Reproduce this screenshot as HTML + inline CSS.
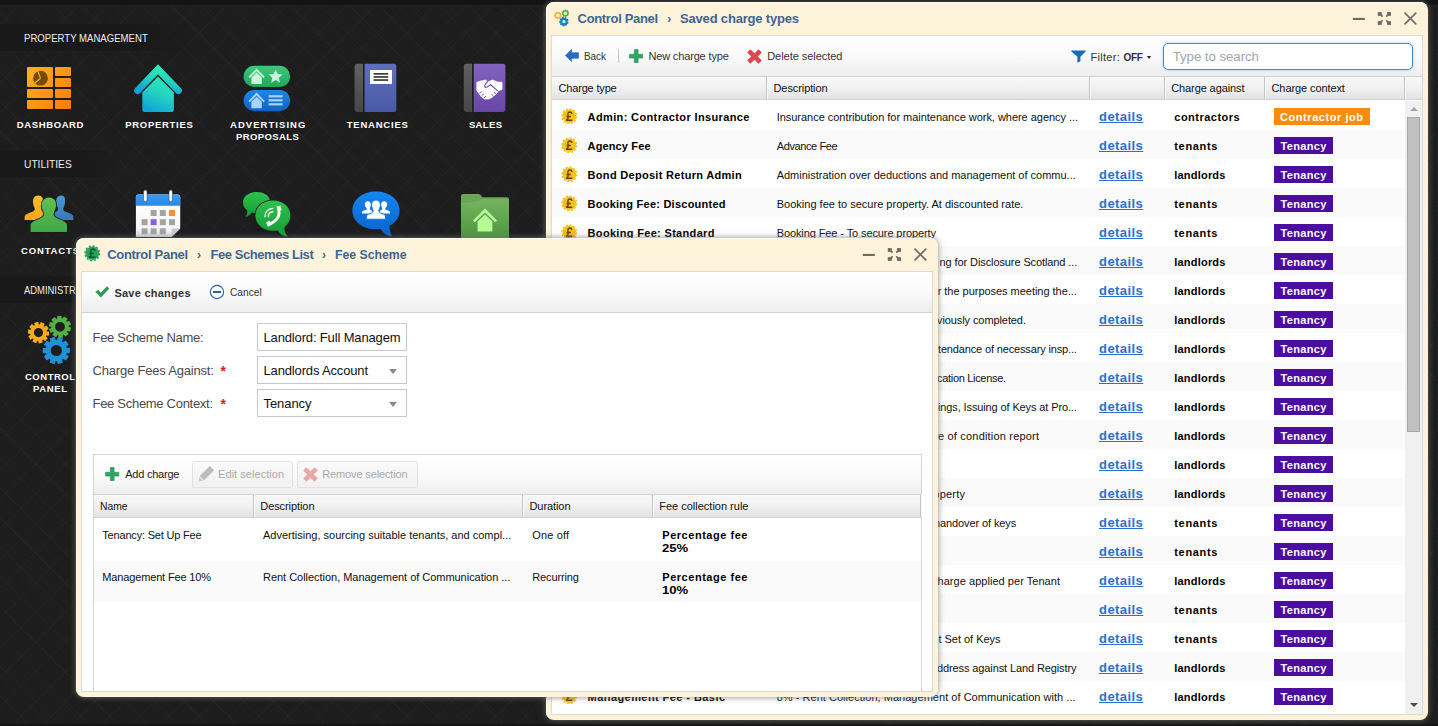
<!DOCTYPE html>
<html>
<head>
<meta charset="utf-8">
<title>Control Panel</title>
<style>
*{box-sizing:border-box;margin:0;padding:0}
html,body{width:1438px;height:726px;overflow:hidden}
body{font-family:"Liberation Sans",sans-serif;font-size:11px;color:#000;position:relative;
 background-color:#1d1d1d;
 background-image:
  repeating-linear-gradient(45deg,rgba(255,255,255,.011) 0,rgba(255,255,255,.011) 1.5px,transparent 1.5px,transparent 21px),
  repeating-linear-gradient(-45deg,rgba(255,255,255,.011) 0,rgba(255,255,255,.011) 1.5px,transparent 1.5px,transparent 21px),
  repeating-linear-gradient(45deg,rgba(255,255,255,.008) 0,rgba(255,255,255,.008) 1px,transparent 1px,transparent 3px),
  repeating-linear-gradient(-45deg,rgba(0,0,0,.05) 0,rgba(0,0,0,.05) 1px,transparent 1px,transparent 3px);
}
.abs{position:absolute}
.t{position:absolute;white-space:pre}
#topbar{position:absolute;left:0;top:0;width:1438px;height:5px;background:linear-gradient(#121212 0,#141414 80%,#1a1a1a 100%)}
#botbar{position:absolute;left:0;top:724px;width:1438px;height:2px;background:#151515}
.sec{position:absolute;left:0;height:27px;background:linear-gradient(90deg,#191919 0,#191919 70%,rgba(25,25,25,0) 100%)}
.dlabel{position:absolute;color:#fff;font-weight:bold;font-size:10px;line-height:12px;letter-spacing:.3px;text-align:center;white-space:nowrap;text-shadow:0 1px 1px rgba(0,0,0,.6)}
.dicon{position:absolute}
.win{position:absolute;background:#fdf3db;border-radius:8px;box-shadow:0 0 6px rgba(118,116,118,.85),inset 1px 1px 0 #fffbe8}
.inner{position:absolute;background:#fff;border:1px solid #dbdad8;overflow:hidden}
.tbar{position:absolute;left:0;right:0;top:0;background:linear-gradient(#ffffff 0,#fbfbfb 45%,#eeeeee 100%);border-bottom:1px solid #d0d0d0}
.ghead{position:absolute;left:0;right:0;background:linear-gradient(#f9f9f9 0,#f0f0f1 50%,#e2e3e5 100%);border-bottom:1px solid #d2d2d2}
.colsep{position:absolute;width:2px;border-left:1px solid #c5c5c5;border-right:1px solid #fafafa}
.search{background:#fff;border:1px solid #3b8fc6;border-radius:5px;box-shadow:0 0 3px rgba(80,170,230,.55)}
.inp{background:#fff;border:1px solid #c8c8c8}
.gpanel{background:#fff;border:1px solid #d4d4d4}
.dbtn{border:1px solid #e2e2e2;border-radius:3px;background:linear-gradient(#fafafa,#f1f1f1)}

</style>
</head>
<body>
<div id="topbar"></div>
<div id="botbar"></div>
<div class="sec" style="top:24px;width:195px"></div>
<div class="sec" style="top:150px;width:118px"></div>
<div class="sec" style="top:276px;width:140px"></div>
<span class="t " style="left:24.2px;top:32.0px;font-size:11px;line-height:12px;transform:scaleX(0.8717);transform-origin:0 0;color:#ededed;">PROPERTY MANAGEMENT</span><span class="t " style="left:24.2px;top:158.0px;font-size:11px;line-height:12px;transform:scaleX(0.9290);transform-origin:0 0;color:#ededed;">UTILITIES</span><span class="t " style="left:24.2px;top:284.0px;font-size:11px;line-height:12px;transform:scaleX(0.8553);transform-origin:0 0;color:#ededed;">ADMINISTRATION</span>
<div id="desk">
<!-- Dashboard -->
<svg class="dicon" style="left:27px;top:67px" width="44" height="42" viewBox="0 0 44 42">
 <defs><linearGradient id="gOr" gradientUnits="userSpaceOnUse" x1="0" y1="0" x2="44" y2="42"><stop offset="0" stop-color="#ffb323"/><stop offset="1" stop-color="#ff7a05"/></linearGradient></defs>
 <g fill="url(#gOr)"><rect x="0" y="0" width="26" height="20" rx="1"/><rect x="28" y="0" width="16" height="9" rx="1"/><rect x="28" y="11" width="16" height="9" rx="1"/><rect x="0" y="22" width="26" height="9" rx="1"/><rect x="28" y="22" width="16" height="9" rx="1"/><rect x="0" y="33" width="26" height="9" rx="1"/><rect x="28" y="33" width="16" height="9" rx="1"/></g>
 <circle cx="13.5" cy="11.2" r="7.4" fill="#754b02"/>
 <path d="M13.5 11.2 L10.6 3.2 M13.5 11.2 L7.6 16.2" stroke="#ffa61c" stroke-width="1.2" fill="none"/>
</svg>

<!-- Properties -->
<svg class="dicon" style="left:133px;top:63px" width="50" height="50" viewBox="0 0 50 50">
 <defs><linearGradient id="gTe" x1="0.7" y1="0" x2="0.3" y2="1"><stop offset="0" stop-color="#2fe9b2"/><stop offset="0.45" stop-color="#24d4c0"/><stop offset="1" stop-color="#0fa3d6"/></linearGradient></defs>
 <path d="M4.6 27.6 L25 6.4 L45.4 27.6" stroke="url(#gTe)" stroke-width="7" stroke-linecap="round" stroke-linejoin="miter" fill="none"/>
 <path d="M9.3 29.6 L25 13.6 L40.9 29.6 L40.9 47 Q40.9 49 38.9 49 L11.3 49 Q9.3 49 9.3 47 Z" fill="url(#gTe)"/>
</svg>

<!-- Advertising proposals -->
<svg class="dicon" style="left:243px;top:65px" width="48" height="47" viewBox="0 0 48 47">
 <defs><linearGradient id="gGr" x1="0" y1="0" x2="0" y2="1"><stop offset="0" stop-color="#3cc97c"/><stop offset="1" stop-color="#21a559"/></linearGradient>
 <linearGradient id="gBl" x1="0" y1="0" x2="0" y2="1"><stop offset="0" stop-color="#1f86e6"/><stop offset="1" stop-color="#0f63c4"/></linearGradient></defs>
 <rect x="0.6" y="0.8" width="46.6" height="21.2" rx="10.6" fill="url(#gGr)"/>
 <rect x="0.6" y="25" width="46.6" height="21.2" rx="10.6" fill="url(#gBl)"/>
 <g fill="#c9f5d9"><path d="M5.4 11.8 L13.6 3.4 L21.8 11.8 L20.4 13.1 L13.6 6.3 L6.8 13.1 Z"/><path d="M8.4 12.6 L13.6 7.6 L18.8 12.6 L18.8 19 L8.4 19 Z"/>
 <path d="M32.6 4.4 l2.1 4.6 5 .5 -3.8 3.3 1.1 4.9 -4.4 -2.6 -4.4 2.6 1.1 -4.9 -3.8 -3.3 5 -.5z"/></g>
 <g fill="#a9d5fb"><path d="M5.4 36 L13.6 27.6 L21.8 36 L20.4 37.3 L13.6 30.5 L6.8 37.3 Z"/><path d="M8.4 36.8 L13.6 31.8 L18.8 36.8 L18.8 43.2 L8.4 43.2 Z"/>
 <rect x="25.6" y="30.2" width="14" height="2.2"/><rect x="25.6" y="34.2" width="14" height="2.2"/><rect x="25.6" y="38.2" width="14" height="2.2"/></g>
</svg>

<!-- Tenancies -->
<svg class="dicon" style="left:354px;top:63px" width="43" height="50" viewBox="0 0 43 50">
 <defs><linearGradient id="gSp" x1="0" y1="0" x2="0" y2="1"><stop offset="0" stop-color="#606060"/><stop offset="1" stop-color="#474747"/></linearGradient>
 <linearGradient id="gBk" x1="0" y1="0" x2="0" y2="1"><stop offset="0" stop-color="#5f70be"/><stop offset="1" stop-color="#4a59a4"/></linearGradient></defs>
 <path d="M3 0.8 H9 V49 H3 Q0.6 49 0.6 46.6 V3.2 Q0.6 0.8 3 0.8Z" fill="url(#gSp)"/>
 <path d="M10.6 0.8 H39.8 Q42.3 0.8 42.3 3.3 V46.5 Q42.3 49 39.8 49 H10.6Z" fill="url(#gBk)"/>
 <rect x="16" y="7" width="22" height="14" fill="#fff"/>
 <g fill="#3a3a3a"><rect x="19.6" y="10" width="14.6" height="1.7"/><rect x="19.6" y="13.1" width="14.6" height="1.7"/><rect x="19.6" y="16.2" width="14.6" height="1.7"/></g>
</svg>

<!-- Sales -->
<svg class="dicon" style="left:463px;top:63px" width="43" height="50" viewBox="0 0 43 50">
 <defs><linearGradient id="gPu" x1="0" y1="0" x2="0" y2="1"><stop offset="0" stop-color="#8163bd"/><stop offset="1" stop-color="#6846a6"/></linearGradient></defs>
 <path d="M3.2 0.8 H9 V49 H3.2 Q0.8 49 0.8 46.6 V3.2 Q0.8 0.8 3.2 0.8Z" fill="url(#gSp)"/>
 <path d="M10.7 0.8 H40 Q42.4 0.8 42.4 3.2 V46.6 Q42.4 49 40 49 H10.7Z" fill="url(#gPu)"/>
 <path d="M13.9 19.3 L18 18 L22.4 17.1 L25.1 18.9 L29.6 17.1 L34.1 18.9 L39 19.3 L39 26.5 L35 27.8 L34.1 29.8 L31.4 32.5 L27.8 35.1 L25.1 36 L21.5 36 L18.7 34.1 L15.3 29.6 L13.9 27.4Z" fill="#fff" stroke="#fff" stroke-width="0.8" stroke-linejoin="round"/>
 <path d="M24.4 18.6 L21.6 22.5 Q21.6 25 24 24 L27.6 21.7 L34.4 27.6" stroke="#7859b4" stroke-width="1.25" fill="none" stroke-linejoin="round" stroke-linecap="round"/>
 <path d="M16.4 30.4 L18.8 28.6 M18.4 33 L20.8 31 M20.8 35.2 L23 33.2 M30.6 33.6 L28.6 31.2 M33 31.4 L31 29" stroke="#7456b0" stroke-width="0.9" fill="none"/>
</svg>

<!-- Contacts -->
<svg class="dicon" style="left:24px;top:195px" width="50" height="38" viewBox="0 0 50 38">
 <defs><linearGradient id="gYe" x1="0" y1="0" x2="0" y2="1"><stop offset="0" stop-color="#ffbe2e"/><stop offset="1" stop-color="#f7a51b"/></linearGradient>
 <linearGradient id="gCb" x1="0" y1="0" x2="0" y2="1"><stop offset="0" stop-color="#4b97d6"/><stop offset="1" stop-color="#3879bb"/></linearGradient>
 <linearGradient id="gCg" x1="0" y1="0" x2="0" y2="1"><stop offset="0" stop-color="#63c04b"/><stop offset="1" stop-color="#3fa648"/></linearGradient></defs>
 <path d="M14.2 0.6 C18 0.6 19.6 3.6 19.2 7.4 C19 10 17.8 12 17.4 13.4 C17.2 15.6 18.6 16.6 21 17.6 L21 25 L0.6 25 L0.6 22.6 C0.6 19.8 3 19 6.4 17.6 C9.6 16.4 11 15.4 10.8 13.4 C10.2 12 9.2 10 9 7.4 C8.8 3.6 10.4 0.6 14.2 0.6Z" fill="url(#gYe)"/>
 <path d="M37.2 0.6 C33.4 0.6 31.8 3.6 32.2 7.4 C32.4 10 33.6 12 34 13.4 C34.2 15.6 32.8 16.6 30.4 17.6 L30.4 25 L49.4 25 L49.4 22.6 C49.4 19.8 47 19 43.6 17.6 C40.4 16.4 39 15.4 39.2 13.4 C39.8 12 40.8 10 41 7.4 C41.2 3.6 41 0.6 37.2 0.6Z" fill="url(#gCb)"/>
 <path d="M25.2 2.4 C30 2.4 32.4 6 32 10.8 C31.8 14 30.2 16.6 29.6 18.4 C29.4 21.2 31.2 22.6 35.4 24.2 C40 26 43 27.2 43 30.8 L43 37 L6.6 37 L6.6 30.8 C6.6 27.2 9.6 26 14.2 24.2 C18.4 22.6 20.2 21.2 20 18.4 C19.4 16.6 17.8 14 17.6 10.8 C17.2 6 20.4 2.4 25.2 2.4Z" fill="url(#gCg)" stroke="#1b1b1b" stroke-width="1.5" paint-order="stroke"/>
</svg>

<!-- Calendar -->
<svg class="dicon" style="left:135px;top:189px" width="46" height="49" viewBox="0 0 46 49">
 <defs><linearGradient id="gCw" x1="0" y1="0" x2="0" y2="1"><stop offset="0" stop-color="#ffffff"/><stop offset="0.8" stop-color="#f7f7f7"/><stop offset="1" stop-color="#dcdcdc"/></linearGradient>
 <linearGradient id="gCh" x1="0" y1="0" x2="0" y2="1"><stop offset="0" stop-color="#3c9cf2"/><stop offset="1" stop-color="#2b86e2"/></linearGradient></defs>
 <path d="M0.9 8 Q0.9 5.4 3.4 5.4 H42.6 Q45.2 5.4 45.2 8 V39.4 L36.6 48 H0.9Z" fill="url(#gCw)"/>
 <path d="M0.9 16.8 V8 Q0.9 5.4 3.4 5.4 H42.6 Q45.2 5.4 45.2 8 V16.8Z" fill="url(#gCh)"/>
 <path d="M36.6 48 L36.6 39.4 L45.2 39.4Z" fill="#c9c9c9"/>
 <g fill="#fff" stroke="#16386a" stroke-width="0.5"><rect x="8.6" y="1" width="3.4" height="11.6" rx="1.7"/><rect x="34" y="1" width="3.4" height="11.6" rx="1.7"/></g>
 <g fill="#a3a3a3"><rect x="15.6" y="21" width="6" height="6"/><rect x="24.8" y="21" width="6" height="6"/><rect x="6.6" y="30.2" width="6" height="6"/><rect x="24.8" y="30.2" width="6" height="6"/><rect x="34" y="30.2" width="6" height="6"/><rect x="6.6" y="39.3" width="6" height="6"/><rect x="15.6" y="39.3" width="6" height="6"/><rect x="24.8" y="39.3" width="6" height="6"/></g>
 <rect x="34" y="21" width="6" height="6" fill="#f6903d"/><rect x="15.6" y="30.2" width="6" height="6" fill="#8b62d6"/>
</svg>

<!-- Green chat -->
<svg class="dicon" style="left:240px;top:190px" width="54" height="50" viewBox="0 0 54 50">
 <defs><linearGradient id="gCh1" x1="0" y1="0" x2="0" y2="1"><stop offset="0" stop-color="#2fc24c"/><stop offset="1" stop-color="#149a36"/></linearGradient></defs>
 <path d="M16.6 2 C25 2 30.4 6.6 30.4 12.6 C30.4 18.6 25 23 16.6 23 C14.6 23 13 22.8 11.6 22.4 C10 24.8 7.6 26.6 5.4 27 C7 25 7.6 22.6 7.2 20.6 C4.6 18.6 3 15.8 3 12.6 C3 6.6 8.4 2 16.6 2Z" fill="url(#gCh1)"/>
 <path d="M33 10.4 C43.4 10.4 50.4 17 50.4 25.6 C50.4 30.4 48 34.4 44.4 37.2 C44.2 40.6 45.4 44 48 46.8 C43.4 46.4 39.8 44 37.8 40.4 C36.2 40.8 34.6 40.8 33 40.8 C22.6 40.8 15.4 34.2 15.4 25.6 C15.4 17 22.6 10.4 33 10.4Z" fill="url(#gCh1)" stroke="#1b1b1b" stroke-width="1.5" paint-order="stroke"/>
 <path d="M38.6 18.6 Q41.4 29.6 28.4 34.6" stroke="#eefbf0" stroke-width="3" fill="none" stroke-linecap="round"/>
 <path d="M36.4 16.6 L40.4 15.4 L41.6 20 L38.2 21.6Z M26 32.4 L29.4 30.4 L31.8 34.6 L28 36.8Z" fill="#eefbf0"/>
 <g stroke="#eefbf0" stroke-width="1.4" fill="none" stroke-linecap="round"><path d="M28.4 26.8 C28.2 24 30 22 32.8 21.8"/><path d="M25 26.8 C24.8 22 28 18.6 32.8 18.4"/></g>
</svg>

<!-- Blue chat -->
<svg class="dicon" style="left:351px;top:190px" width="50" height="48" viewBox="0 0 50 48">
 <defs><linearGradient id="gCh2" x1="0" y1="0" x2="0" y2="1"><stop offset="0" stop-color="#1584ee"/><stop offset="1" stop-color="#0a63cc"/></linearGradient></defs>
 <path d="M25 1.6 C38.6 1.6 48.6 9.8 48.6 20.4 C48.6 26.6 45.2 32 38.6 35.8 C38.4 39.6 39.2 43.4 41 46.4 C35.6 45.6 31.8 42.8 29.6 38.9 C28.2 39.2 26.6 39.2 25 39.2 C11.4 39.2 1.4 31 1.4 20.4 C1.4 9.8 11.4 1.6 25 1.6Z" fill="url(#gCh2)"/>
 <g fill="#fff">
  <path d="M16.8 11.2 C19 11.2 20 13 19.8 15 C19.6 16.6 19 17.6 18.8 18.4 C18.8 19.6 19.6 20 21 20.6 L21 23.4 L11 23.4 L11 22.4 C11 21 12.4 20.6 14.2 20 C15.4 19.6 16 19.2 15.8 18.4 C15.4 17.6 14 16.6 13.8 15 C13.6 13 14.6 11.2 16.8 11.2Z"/>
  <path d="M33.2 11.2 C31 11.2 30 13 30.2 15 C30.4 16.6 31 17.6 31.2 18.4 C31.2 19.6 30.4 20 29 20.6 L29 23.4 L39 23.4 L39 22.4 C39 21 37.6 20.6 35.8 20 C34.6 19.6 34 19.2 34.2 18.4 C34.6 17.6 36 16.6 36.2 15 C36.4 13 35.4 11.2 33.2 11.2Z"/>
  <path d="M25 10 C28 10 29.6 12.4 29.4 15.4 C29.2 17.6 28.2 19.2 27.8 20.4 C27.8 22 28.8 22.8 31 23.6 C33.4 24.4 34.6 25.2 34.6 27 L34.6 29.2 L15.4 29.2 L15.4 27 C15.4 25.2 16.6 24.4 19 23.6 C21.2 22.8 22.2 22 22.2 20.4 C21.8 19.2 20.8 17.6 20.6 15.4 C20.4 12.4 22 10 25 10Z" stroke="#0e72dc" stroke-width="0.9"/>
 </g>
</svg>

<!-- Green folder -->
<svg class="dicon" style="left:460px;top:193px" width="50" height="46" viewBox="0 0 50 46">
 <defs><linearGradient id="gFo" x1="0" y1="0" x2="0" y2="1"><stop offset="0" stop-color="#76b460"/><stop offset="1" stop-color="#4c9440"/></linearGradient></defs>
 <path d="M1 3.4 Q1 1 3.4 1 H18.6 Q20.4 1 21.2 2.6 L22 4.2 H46.6 Q49 4.2 49 6.6 V46 H1Z" fill="#6aa656"/>
 <path d="M1 10 Q12 9.4 17.4 8.4 Q20.6 7.8 22 6 H46.6 Q49 6 49 8.4 V46 H1Z" fill="url(#gFo)"/>
 <g fill="#b6fb96"><path d="M13 27.4 L25 15.4 L37 27.4 L35.2 29.2 L25 19.2 L14.8 29.2 Z"/><path d="M17.6 28.6 L25 21.4 L32.4 28.6 L32.4 38.4 L17.6 38.4 Z"/></g>
</svg>

<!-- Control panel gears -->
<svg class="dicon" style="left:26px;top:314px" width="50" height="52" viewBox="0 0 50 52">
 <path fill-rule="evenodd" fill="#f8ab20" d="M20.59 17.26 L23.26 17.65 L22.85 21.67 L20.16 21.52 L19.83 22.27 L21.76 24.15 L19.07 27.17 L16.98 25.47 L16.27 25.88 L16.73 28.54 L12.78 29.40 L12.09 26.79 L11.27 26.71 L10.08 29.13 L6.38 27.50 L7.36 24.99 L6.74 24.44 L4.36 25.70 L2.32 22.20 L4.59 20.74 L4.41 19.94 L1.74 19.55 L2.15 15.53 L4.84 15.68 L5.17 14.93 L3.24 13.05 L5.93 10.03 L8.02 11.73 L8.73 11.32 L8.27 8.66 L12.22 7.80 L12.91 10.41 L13.73 10.49 L14.92 8.07 L18.62 9.70 L17.64 12.21 L18.26 12.76 L20.64 11.50 L22.68 15.00 L20.41 16.46 Z M17.10 18.60 A4.60 4.60 0 1 0 7.90 18.60 A4.60 4.60 0 1 0 17.10 18.60 Z"/><path fill-rule="evenodd" fill="#52b043" d="M42.60 12.68 L45.18 13.49 L44.14 17.56 L41.49 17.03 L41.03 17.76 L42.64 19.93 L39.41 22.61 L37.57 20.62 L36.77 20.94 L36.80 23.64 L32.61 23.91 L32.29 21.23 L31.46 21.02 L29.89 23.22 L26.34 20.97 L27.67 18.62 L27.11 17.95 L24.55 18.81 L23.00 14.91 L25.46 13.78 L25.40 12.92 L22.82 12.11 L23.86 8.04 L26.51 8.57 L26.97 7.84 L25.36 5.67 L28.59 2.99 L30.43 4.98 L31.23 4.66 L31.20 1.96 L35.39 1.69 L35.71 4.37 L36.54 4.58 L38.11 2.38 L41.66 4.63 L40.33 6.98 L40.89 7.65 L43.45 6.79 L45.00 10.69 L42.54 11.82 Z M38.90 12.80 A4.90 4.90 0 1 0 29.10 12.80 A4.90 4.90 0 1 0 38.90 12.80 Z"/><path fill-rule="evenodd" fill="#1f8fd6" d="M40.53 33.74 L43.86 33.91 L43.86 39.09 L40.53 39.26 L40.20 40.28 L42.79 42.38 L39.75 46.56 L36.95 44.75 L36.09 45.38 L36.95 48.59 L32.03 50.19 L30.83 47.09 L29.77 47.09 L28.57 50.19 L23.65 48.59 L24.51 45.38 L23.65 44.75 L20.85 46.56 L17.81 42.38 L20.40 40.28 L20.07 39.26 L16.74 39.09 L16.74 33.91 L20.07 33.74 L20.40 32.72 L17.81 30.62 L20.85 26.44 L23.65 28.25 L24.51 27.62 L23.65 24.41 L28.57 22.81 L29.77 25.91 L30.83 25.91 L32.03 22.81 L36.95 24.41 L36.09 27.62 L36.95 28.25 L39.75 26.44 L42.79 30.62 L40.20 32.72 Z M35.90 36.50 A5.60 5.60 0 1 0 24.70 36.50 A5.60 5.60 0 1 0 35.90 36.50 Z"/>
</svg>
</div>


<span class="t " style="left:16.8px;top:119.0px;font-size:9.5px;line-height:11px;font-weight:bold;letter-spacing:0.61px;color:#fff;">DASHBOARD</span><span class="t " style="left:125.2px;top:119.0px;font-size:9.5px;line-height:11px;font-weight:bold;letter-spacing:0.71px;color:#fff;">PROPERTIES</span><span class="t " style="left:230.0px;top:119.0px;font-size:9.5px;line-height:11px;font-weight:bold;letter-spacing:1.05px;color:#fff;">ADVERTISING</span><span class="t " style="left:236.0px;top:131.0px;font-size:9.5px;line-height:11px;font-weight:bold;letter-spacing:0.39px;color:#fff;">PROPOSALS</span><span class="t " style="left:346.7px;top:119.0px;font-size:9.5px;line-height:11px;font-weight:bold;letter-spacing:0.79px;color:#fff;">TENANCIES</span><span class="t " style="left:468.9px;top:119.0px;font-size:9.5px;line-height:11px;font-weight:bold;letter-spacing:0.35px;color:#fff;">SALES</span><span class="t " style="left:21.0px;top:245.0px;font-size:9.5px;line-height:11px;font-weight:bold;letter-spacing:0.85px;color:#fff;">CONTACTS</span><span class="t " style="left:25.0px;top:371.0px;font-size:9.5px;line-height:11px;font-weight:bold;letter-spacing:0.51px;color:#fff;">CONTROL</span><span class="t " style="left:33.0px;top:383.0px;font-size:9.5px;line-height:11px;font-weight:bold;letter-spacing:0.62px;color:#fff;">PANEL</span>
<!-- BACK WINDOW -->
<div class="win" id="w1" style="left:546px;top:2px;width:882px;height:718px">
<svg class="abs" style="left:7px;top:7px" width="20" height="20" viewBox="0 0 20 20"><circle cx="4.9" cy="6.4" r="2" fill="#fdeeb4"/><circle cx="12.4" cy="4.3" r="2" fill="#d4f3bc"/><circle cx="10.9" cy="12.6" r="2" fill="#c6f1fb"/><path fill-rule="evenodd" fill="#eab52e" d="M7.89 6.12 L8.70 6.36 L8.39 7.91 L7.54 7.82 L7.37 8.11 L7.83 8.82 L6.60 9.80 L6.01 9.19 L5.69 9.29 L5.60 10.14 L4.02 10.10 L3.96 9.25 L3.65 9.13 L3.03 9.71 L1.85 8.66 L2.35 7.98 L2.19 7.68 L1.34 7.73 L1.11 6.17 L1.93 5.97 L2.00 5.64 L1.32 5.13 L2.14 3.79 L2.90 4.16 L3.16 3.95 L2.97 3.13 L4.47 2.62 L4.81 3.40 L5.14 3.41 L5.52 2.65 L7.00 3.23 L6.76 4.04 L7.01 4.27 L7.79 3.93 L8.54 5.32 L7.84 5.79 Z M6.80 6.40 A1.90 1.90 0 1 0 3.00 6.40 A1.90 1.90 0 1 0 6.80 6.40 Z"/><path fill-rule="evenodd" fill="#56ab3c" d="M15.27 3.43 L16.12 3.51 L16.12 5.09 L15.27 5.17 L15.16 5.48 L15.76 6.08 L14.74 7.29 L14.04 6.81 L13.75 6.98 L13.82 7.82 L12.27 8.10 L12.04 7.28 L11.71 7.22 L11.23 7.91 L9.86 7.12 L10.21 6.35 L10.00 6.10 L9.18 6.31 L8.64 4.83 L9.40 4.47 L9.40 4.13 L8.64 3.77 L9.18 2.29 L10.00 2.50 L10.21 2.25 L9.86 1.48 L11.23 0.69 L11.71 1.38 L12.04 1.32 L12.27 0.50 L13.82 0.78 L13.75 1.62 L14.04 1.79 L14.74 1.31 L15.76 2.52 L15.16 3.12 Z M14.30 4.30 A1.90 1.90 0 1 0 10.50 4.30 A1.90 1.90 0 1 0 14.30 4.30 Z"/><path fill-rule="evenodd" fill="#1580c2" d="M14.60 12.63 L15.68 13.03 L15.09 14.94 L13.97 14.67 L13.72 15.00 L14.28 16.01 L12.61 17.09 L11.92 16.16 L11.52 16.25 L11.30 17.38 L9.32 17.13 L9.40 15.98 L9.03 15.79 L8.13 16.52 L6.78 15.06 L7.57 14.22 L7.41 13.84 L6.26 13.83 L6.16 11.83 L7.31 11.71 L7.43 11.31 L6.56 10.56 L7.76 8.97 L8.72 9.61 L9.07 9.38 L8.89 8.24 L10.83 7.80 L11.16 8.91 L11.57 8.96 L12.16 7.97 L13.93 8.88 L13.47 9.94 L13.75 10.24 L14.84 9.86 L15.61 11.70 L14.58 12.21 Z M12.60 12.60 A1.70 1.70 0 1 0 9.20 12.60 A1.70 1.70 0 1 0 12.60 12.60 Z"/></svg><span class="t " style="left:31.6px;top:9.0px;font-size:13px;line-height:15px;font-weight:bold;letter-spacing:-0.34px;color:#3f6494;">Control Panel</span><span class="t " style="left:121.2px;top:9.5px;font-size:12px;line-height:14px;font-weight:bold;color:#3f6494;">›</span><span class="t " style="left:134.0px;top:9.0px;font-size:13px;line-height:15px;font-weight:bold;letter-spacing:-0.18px;color:#3f6494;">Saved charge types</span><svg class="abs" style="left:806px;top:8px" width="70" height="20" viewBox="0 0 70 20"><rect x="0.8" y="7.9" width="12" height="2.1" fill="#6f6a64"/><g fill="#6f6a64"><rect x="25.8" y="2.1" width="4" height="3.7"/><rect x="35" y="2.1" width="4" height="3.7"/><rect x="25.8" y="11.2" width="4" height="3.7"/><rect x="35" y="11.2" width="4" height="3.7"/></g><path d="M28.6 4.6 L30.1 6.2 M36.2 4.6 L34.7 6.2 M28.6 12.4 L30.1 10.8 M36.2 12.4 L34.7 10.8" stroke="#6f6a64" stroke-width="1.7" stroke-linecap="round" fill="none"/><path d="M52.5 2.6 L64.3 14.4 M64.3 2.6 L52.5 14.4" stroke="#6f6a64" stroke-width="1.6" fill="none"/></svg>
 <div class="inner" id="w1i" style="left:5px;top:33px;width:872px;height:680px"><div class="tbar" style="height:41px"></div><svg class="abs" style="left:13px;top:13.4px" width="14" height="13" viewBox="0 0 15 14"><path d="M0.4 7 L7 0.6 V4 H14.4 V10 H7 V13.4 Z" fill="#2a6ec4" stroke="#1d57a4" stroke-width="0.6"/></svg><span class="t " style="left:32.4px;top:14.0px;font-size:11px;line-height:12px;transform:scaleX(0.8991);transform-origin:0 0;color:#333;">Back</span><div class="abs" style="left:66px;top:13px;width:1px;height:14px;background:#b4c8de"></div><svg class="abs" style="left:76.8px;top:12.8px;opacity:1" width="14.4" height="14.4" viewBox="0 0 15 15"><path d="M5.5 0.6 H9.5 V5.5 H14.4 V9.5 H9.5 V14.4 H5.5 V9.5 H0.6 V5.5 H5.5 Z" fill="#2fa565" stroke="#22905a" stroke-width="0.6"/></svg><span class="t " style="left:96.4px;top:14.0px;font-size:11px;line-height:12px;letter-spacing:-0.15px;color:#333;">New charge type</span><svg class="abs" style="left:195.4px;top:12.7px;opacity:1" width="15" height="15" viewBox="0 0 15 15"><g transform="rotate(45 7.5 7.5)" fill="#e0474c"><rect x="-0.6" y="5.2" width="16.2" height="4.6" rx="0.7"/><rect x="5.2" y="-0.6" width="4.6" height="16.2" rx="0.7"/></g></svg><span class="t " style="left:215.2px;top:14.0px;font-size:11px;line-height:12px;letter-spacing:-0.04px;color:#333;">Delete selected</span><svg class="abs" style="left:518.5px;top:14px" width="15" height="13" viewBox="0 0 15 13"><path d="M0.4 0.4 H14.6 V1.6 L9.4 6.8 V11.2 L6.4 12.8 V6.8 L0.4 1.6 Z" fill="#1a6cb6"/></svg><span class="t " style="left:538.4px;top:15.0px;font-size:11px;line-height:12px;letter-spacing:0.30px;color:#333;">Filter:</span><span class="t " style="left:571.6px;top:16.0px;font-size:10px;line-height:11px;font-weight:bold;letter-spacing:-0.35px;color:#333;">OFF</span><div class="abs" style="left:595px;top:19.5px;width:0;height:0;border-left:2.5px solid transparent;border-right:2.5px solid transparent;border-top:3px solid #222"></div><div class="abs search" style="left:611px;top:7px;width:250px;height:27px"></div><span class="t " style="left:620.7px;top:13.0px;font-size:13.3px;line-height:15px;letter-spacing:-0.07px;color:#a6a6a6;">Type to search</span><div class="ghead" style="top:41px;height:23px"></div><div class="colsep" style="left:214px;top:41px;height:22px"></div><div class="colsep" style="left:537px;top:41px;height:22px"></div><div class="colsep" style="left:612px;top:41px;height:22px"></div><div class="colsep" style="left:712px;top:41px;height:22px"></div><div class="colsep" style="left:852px;top:41px;height:22px"></div><span class="t " style="left:6.5px;top:46.0px;font-size:11px;line-height:12px;letter-spacing:-0.17px;color:#111;">Charge type</span><span class="t " style="left:221.5px;top:46.0px;font-size:11px;line-height:12px;letter-spacing:-0.09px;color:#111;">Description</span><span class="t " style="left:619.2px;top:46.0px;font-size:11px;line-height:12px;letter-spacing:-0.10px;color:#111;">Charge against</span><span class="t " style="left:719.5px;top:46.0px;font-size:11px;line-height:12px;letter-spacing:-0.09px;color:#111;">Charge context</span><svg class="abs" style="left:8.7px;top:71.7px" width="16.6" height="16.6" viewBox="0 0 18 18"><circle cx="9" cy="9" r="7.4" fill="#f1c21d"/><circle cx="9" cy="9" r="7.9" fill="none" stroke="#f1c21d" stroke-width="1.5" stroke-dasharray="2.3 1.836"/><circle cx="9" cy="9" r="5.6" fill="#f1c21d"/><path d="M11.9 6.4 C11.6 5 10.6 4.4 9.6 4.4 C8 4.4 7.3 5.6 7.5 7.2 L7.8 9.2 M6 9.2 H10.6 M7.8 9.2 C8 10.8 7.4 12.2 6 13.2 H12.2" fill="none" stroke="#6e3f0c" stroke-width="1.55" stroke-linejoin="round"/></svg><span class="t " style="left:35.6px;top:75.0px;font-size:11px;line-height:12px;font-weight:bold;letter-spacing:0.37px;color:#000;">Admin: Contractor Insurance</span><span class="t " style="left:224.7px;top:75.0px;font-size:11px;line-height:12px;letter-spacing:-0.03px;color:#111;">Insurance contribution for maintenance work, where agency ...</span><span class="t " style="left:547.0px;top:73.0px;font-size:13px;line-height:15px;font-weight:bold;letter-spacing:0.44px;color:#2c6fcf;text-decoration:underline;">details</span><span class="t " style="left:622.3px;top:75.0px;font-size:11px;line-height:12px;font-weight:bold;letter-spacing:0.48px;color:#000;">contractors</span><div class="abs" style="left:722px;top:72px;width:96px;height:17px;background:#fb8c09"></div><span class="t " style="left:728.0px;top:75.0px;font-size:11px;line-height:12px;font-weight:bold;letter-spacing:0.56px;color:#fff;">Contractor job</span><div class="abs" style="left:0;top:94.00px;width:854px;height:29px;background:#fafafa"></div><svg class="abs" style="left:8.7px;top:100.7px" width="16.6" height="16.6" viewBox="0 0 18 18"><circle cx="9" cy="9" r="7.4" fill="#f1c21d"/><circle cx="9" cy="9" r="7.9" fill="none" stroke="#f1c21d" stroke-width="1.5" stroke-dasharray="2.3 1.836"/><circle cx="9" cy="9" r="5.6" fill="#f1c21d"/><path d="M11.9 6.4 C11.6 5 10.6 4.4 9.6 4.4 C8 4.4 7.3 5.6 7.5 7.2 L7.8 9.2 M6 9.2 H10.6 M7.8 9.2 C8 10.8 7.4 12.2 6 13.2 H12.2" fill="none" stroke="#6e3f0c" stroke-width="1.55" stroke-linejoin="round"/></svg><span class="t " style="left:35.6px;top:104.0px;font-size:11px;line-height:12px;font-weight:bold;letter-spacing:0.13px;color:#000;">Agency Fee</span><span class="t " style="left:224.7px;top:104.0px;font-size:11px;line-height:12px;letter-spacing:-0.38px;color:#111;">Advance Fee</span><span class="t " style="left:547.0px;top:102.0px;font-size:13px;line-height:15px;font-weight:bold;letter-spacing:0.44px;color:#2c6fcf;text-decoration:underline;">details</span><span class="t " style="left:622.3px;top:104.0px;font-size:11px;line-height:12px;font-weight:bold;letter-spacing:0.66px;color:#000;">tenants</span><div class="abs" style="left:722px;top:101px;width:59px;height:17px;background:#4a0d9e"></div><span class="t " style="left:728.5px;top:104.0px;font-size:11px;line-height:12px;font-weight:bold;letter-spacing:0.33px;color:#fff;">Tenancy</span><svg class="abs" style="left:8.7px;top:129.7px" width="16.6" height="16.6" viewBox="0 0 18 18"><circle cx="9" cy="9" r="7.4" fill="#f1c21d"/><circle cx="9" cy="9" r="7.9" fill="none" stroke="#f1c21d" stroke-width="1.5" stroke-dasharray="2.3 1.836"/><circle cx="9" cy="9" r="5.6" fill="#f1c21d"/><path d="M11.9 6.4 C11.6 5 10.6 4.4 9.6 4.4 C8 4.4 7.3 5.6 7.5 7.2 L7.8 9.2 M6 9.2 H10.6 M7.8 9.2 C8 10.8 7.4 12.2 6 13.2 H12.2" fill="none" stroke="#6e3f0c" stroke-width="1.55" stroke-linejoin="round"/></svg><span class="t " style="left:35.6px;top:133.0px;font-size:11px;line-height:12px;font-weight:bold;letter-spacing:0.30px;color:#000;">Bond Deposit Return Admin</span><span class="t " style="left:224.7px;top:133.0px;font-size:11px;line-height:12px;letter-spacing:-0.01px;color:#111;">Administration over deductions and management of commu...</span><span class="t " style="left:547.0px;top:131.0px;font-size:13px;line-height:15px;font-weight:bold;letter-spacing:0.44px;color:#2c6fcf;text-decoration:underline;">details</span><span class="t " style="left:622.3px;top:133.0px;font-size:11px;line-height:12px;font-weight:bold;letter-spacing:0.20px;color:#000;">landlords</span><div class="abs" style="left:722px;top:130px;width:59px;height:17px;background:#4a0d9e"></div><span class="t " style="left:728.5px;top:133.0px;font-size:11px;line-height:12px;font-weight:bold;letter-spacing:0.33px;color:#fff;">Tenancy</span><div class="abs" style="left:0;top:152.00px;width:854px;height:29px;background:#fafafa"></div><svg class="abs" style="left:8.7px;top:158.7px" width="16.6" height="16.6" viewBox="0 0 18 18"><circle cx="9" cy="9" r="7.4" fill="#f1c21d"/><circle cx="9" cy="9" r="7.9" fill="none" stroke="#f1c21d" stroke-width="1.5" stroke-dasharray="2.3 1.836"/><circle cx="9" cy="9" r="5.6" fill="#f1c21d"/><path d="M11.9 6.4 C11.6 5 10.6 4.4 9.6 4.4 C8 4.4 7.3 5.6 7.5 7.2 L7.8 9.2 M6 9.2 H10.6 M7.8 9.2 C8 10.8 7.4 12.2 6 13.2 H12.2" fill="none" stroke="#6e3f0c" stroke-width="1.55" stroke-linejoin="round"/></svg><span class="t " style="left:35.6px;top:162.0px;font-size:11px;line-height:12px;font-weight:bold;letter-spacing:0.24px;color:#000;">Booking Fee: Discounted</span><span class="t " style="left:224.7px;top:162.0px;font-size:11px;line-height:12px;letter-spacing:0.01px;color:#111;">Booking fee to secure property. At discounted rate.</span><span class="t " style="left:547.0px;top:160.0px;font-size:13px;line-height:15px;font-weight:bold;letter-spacing:0.44px;color:#2c6fcf;text-decoration:underline;">details</span><span class="t " style="left:622.3px;top:162.0px;font-size:11px;line-height:12px;font-weight:bold;letter-spacing:0.66px;color:#000;">tenants</span><div class="abs" style="left:722px;top:159px;width:59px;height:17px;background:#4a0d9e"></div><span class="t " style="left:728.5px;top:162.0px;font-size:11px;line-height:12px;font-weight:bold;letter-spacing:0.33px;color:#fff;">Tenancy</span><svg class="abs" style="left:8.7px;top:187.7px" width="16.6" height="16.6" viewBox="0 0 18 18"><circle cx="9" cy="9" r="7.4" fill="#f1c21d"/><circle cx="9" cy="9" r="7.9" fill="none" stroke="#f1c21d" stroke-width="1.5" stroke-dasharray="2.3 1.836"/><circle cx="9" cy="9" r="5.6" fill="#f1c21d"/><path d="M11.9 6.4 C11.6 5 10.6 4.4 9.6 4.4 C8 4.4 7.3 5.6 7.5 7.2 L7.8 9.2 M6 9.2 H10.6 M7.8 9.2 C8 10.8 7.4 12.2 6 13.2 H12.2" fill="none" stroke="#6e3f0c" stroke-width="1.55" stroke-linejoin="round"/></svg><span class="t " style="left:35.6px;top:191.0px;font-size:11px;line-height:12px;font-weight:bold;letter-spacing:0.32px;color:#000;">Booking Fee: Standard</span><span class="t " style="left:224.7px;top:191.0px;font-size:11px;line-height:12px;letter-spacing:-0.10px;color:#111;">Booking Fee - To secure property</span><span class="t " style="left:547.0px;top:189.0px;font-size:13px;line-height:15px;font-weight:bold;letter-spacing:0.44px;color:#2c6fcf;text-decoration:underline;">details</span><span class="t " style="left:622.3px;top:191.0px;font-size:11px;line-height:12px;font-weight:bold;letter-spacing:0.66px;color:#000;">tenants</span><div class="abs" style="left:722px;top:188px;width:59px;height:17px;background:#4a0d9e"></div><span class="t " style="left:728.5px;top:191.0px;font-size:11px;line-height:12px;font-weight:bold;letter-spacing:0.33px;color:#fff;">Tenancy</span><div class="abs" style="left:0;top:210.00px;width:854px;height:29px;background:#fafafa"></div><svg class="abs" style="left:8.7px;top:216.7px" width="16.6" height="16.6" viewBox="0 0 18 18"><circle cx="9" cy="9" r="7.4" fill="#f1c21d"/><circle cx="9" cy="9" r="7.9" fill="none" stroke="#f1c21d" stroke-width="1.5" stroke-dasharray="2.3 1.836"/><circle cx="9" cy="9" r="5.6" fill="#f1c21d"/><path d="M11.9 6.4 C11.6 5 10.6 4.4 9.6 4.4 C8 4.4 7.3 5.6 7.5 7.2 L7.8 9.2 M6 9.2 H10.6 M7.8 9.2 C8 10.8 7.4 12.2 6 13.2 H12.2" fill="none" stroke="#6e3f0c" stroke-width="1.55" stroke-linejoin="round"/></svg><span class="t " style="left:35.6px;top:220.0px;font-size:11px;line-height:12px;font-weight:bold;color:#000;">Disclosure Scotland Check</span><span class="t " style="left:387.6px;top:220.0px;font-size:11px;line-height:12px;letter-spacing:-0.10px;color:#111;">ng for Disclosure Scotland ...</span><span class="t " style="left:547.0px;top:218.0px;font-size:13px;line-height:15px;font-weight:bold;letter-spacing:0.44px;color:#2c6fcf;text-decoration:underline;">details</span><span class="t " style="left:622.3px;top:220.0px;font-size:11px;line-height:12px;font-weight:bold;letter-spacing:0.20px;color:#000;">landlords</span><div class="abs" style="left:722px;top:217px;width:59px;height:17px;background:#4a0d9e"></div><span class="t " style="left:728.5px;top:220.0px;font-size:11px;line-height:12px;font-weight:bold;letter-spacing:0.33px;color:#fff;">Tenancy</span><svg class="abs" style="left:8.7px;top:245.7px" width="16.6" height="16.6" viewBox="0 0 18 18"><circle cx="9" cy="9" r="7.4" fill="#f1c21d"/><circle cx="9" cy="9" r="7.9" fill="none" stroke="#f1c21d" stroke-width="1.5" stroke-dasharray="2.3 1.836"/><circle cx="9" cy="9" r="5.6" fill="#f1c21d"/><path d="M11.9 6.4 C11.6 5 10.6 4.4 9.6 4.4 C8 4.4 7.3 5.6 7.5 7.2 L7.8 9.2 M6 9.2 H10.6 M7.8 9.2 C8 10.8 7.4 12.2 6 13.2 H12.2" fill="none" stroke="#6e3f0c" stroke-width="1.55" stroke-linejoin="round"/></svg><span class="t " style="left:35.6px;top:249.0px;font-size:11px;line-height:12px;font-weight:bold;color:#000;">EPC Certificate</span><span class="t " style="left:385.7px;top:249.0px;font-size:11px;line-height:12px;letter-spacing:-0.03px;color:#111;">r the purposes meeting the...</span><span class="t " style="left:547.0px;top:247.0px;font-size:13px;line-height:15px;font-weight:bold;letter-spacing:0.44px;color:#2c6fcf;text-decoration:underline;">details</span><span class="t " style="left:622.3px;top:249.0px;font-size:11px;line-height:12px;font-weight:bold;letter-spacing:0.20px;color:#000;">landlords</span><div class="abs" style="left:722px;top:246px;width:59px;height:17px;background:#4a0d9e"></div><span class="t " style="left:728.5px;top:249.0px;font-size:11px;line-height:12px;font-weight:bold;letter-spacing:0.33px;color:#fff;">Tenancy</span><div class="abs" style="left:0;top:268.00px;width:854px;height:29px;background:#fafafa"></div><svg class="abs" style="left:8.7px;top:274.7px" width="16.6" height="16.6" viewBox="0 0 18 18"><circle cx="9" cy="9" r="7.4" fill="#f1c21d"/><circle cx="9" cy="9" r="7.9" fill="none" stroke="#f1c21d" stroke-width="1.5" stroke-dasharray="2.3 1.836"/><circle cx="9" cy="9" r="5.6" fill="#f1c21d"/><path d="M11.9 6.4 C11.6 5 10.6 4.4 9.6 4.4 C8 4.4 7.3 5.6 7.5 7.2 L7.8 9.2 M6 9.2 H10.6 M7.8 9.2 C8 10.8 7.4 12.2 6 13.2 H12.2" fill="none" stroke="#6e3f0c" stroke-width="1.55" stroke-linejoin="round"/></svg><span class="t " style="left:35.6px;top:278.0px;font-size:11px;line-height:12px;font-weight:bold;color:#000;">Gas Safety Check</span><span class="t " style="left:385.0px;top:278.0px;font-size:11px;line-height:12px;letter-spacing:-0.09px;color:#111;">viously completed.</span><span class="t " style="left:547.0px;top:276.0px;font-size:13px;line-height:15px;font-weight:bold;letter-spacing:0.44px;color:#2c6fcf;text-decoration:underline;">details</span><span class="t " style="left:622.3px;top:278.0px;font-size:11px;line-height:12px;font-weight:bold;letter-spacing:0.20px;color:#000;">landlords</span><div class="abs" style="left:722px;top:275px;width:59px;height:17px;background:#4a0d9e"></div><span class="t " style="left:728.5px;top:278.0px;font-size:11px;line-height:12px;font-weight:bold;letter-spacing:0.33px;color:#fff;">Tenancy</span><svg class="abs" style="left:8.7px;top:303.7px" width="16.6" height="16.6" viewBox="0 0 18 18"><circle cx="9" cy="9" r="7.4" fill="#f1c21d"/><circle cx="9" cy="9" r="7.9" fill="none" stroke="#f1c21d" stroke-width="1.5" stroke-dasharray="2.3 1.836"/><circle cx="9" cy="9" r="5.6" fill="#f1c21d"/><path d="M11.9 6.4 C11.6 5 10.6 4.4 9.6 4.4 C8 4.4 7.3 5.6 7.5 7.2 L7.8 9.2 M6 9.2 H10.6 M7.8 9.2 C8 10.8 7.4 12.2 6 13.2 H12.2" fill="none" stroke="#6e3f0c" stroke-width="1.55" stroke-linejoin="round"/></svg><span class="t " style="left:35.6px;top:307.0px;font-size:11px;line-height:12px;font-weight:bold;color:#000;">Inspection Fee</span><span class="t " style="left:386.0px;top:307.0px;font-size:11px;line-height:12px;letter-spacing:-0.15px;color:#111;">tendance of necessary insp...</span><span class="t " style="left:547.0px;top:305.0px;font-size:13px;line-height:15px;font-weight:bold;letter-spacing:0.44px;color:#2c6fcf;text-decoration:underline;">details</span><span class="t " style="left:622.3px;top:307.0px;font-size:11px;line-height:12px;font-weight:bold;letter-spacing:0.20px;color:#000;">landlords</span><div class="abs" style="left:722px;top:304px;width:59px;height:17px;background:#4a0d9e"></div><span class="t " style="left:728.5px;top:307.0px;font-size:11px;line-height:12px;font-weight:bold;letter-spacing:0.33px;color:#fff;">Tenancy</span><div class="abs" style="left:0;top:326.00px;width:854px;height:29px;background:#fafafa"></div><svg class="abs" style="left:8.7px;top:332.7px" width="16.6" height="16.6" viewBox="0 0 18 18"><circle cx="9" cy="9" r="7.4" fill="#f1c21d"/><circle cx="9" cy="9" r="7.9" fill="none" stroke="#f1c21d" stroke-width="1.5" stroke-dasharray="2.3 1.836"/><circle cx="9" cy="9" r="5.6" fill="#f1c21d"/><path d="M11.9 6.4 C11.6 5 10.6 4.4 9.6 4.4 C8 4.4 7.3 5.6 7.5 7.2 L7.8 9.2 M6 9.2 H10.6 M7.8 9.2 C8 10.8 7.4 12.2 6 13.2 H12.2" fill="none" stroke="#6e3f0c" stroke-width="1.55" stroke-linejoin="round"/></svg><span class="t " style="left:35.6px;top:336.0px;font-size:11px;line-height:12px;font-weight:bold;color:#000;">HMO License</span><span class="t " style="left:385.0px;top:336.0px;font-size:11px;line-height:12px;letter-spacing:-0.31px;color:#111;">cation License.</span><span class="t " style="left:547.0px;top:334.0px;font-size:13px;line-height:15px;font-weight:bold;letter-spacing:0.44px;color:#2c6fcf;text-decoration:underline;">details</span><span class="t " style="left:622.3px;top:336.0px;font-size:11px;line-height:12px;font-weight:bold;letter-spacing:0.20px;color:#000;">landlords</span><div class="abs" style="left:722px;top:333px;width:59px;height:17px;background:#4a0d9e"></div><span class="t " style="left:728.5px;top:336.0px;font-size:11px;line-height:12px;font-weight:bold;letter-spacing:0.33px;color:#fff;">Tenancy</span><svg class="abs" style="left:8.7px;top:361.7px" width="16.6" height="16.6" viewBox="0 0 18 18"><circle cx="9" cy="9" r="7.4" fill="#f1c21d"/><circle cx="9" cy="9" r="7.9" fill="none" stroke="#f1c21d" stroke-width="1.5" stroke-dasharray="2.3 1.836"/><circle cx="9" cy="9" r="5.6" fill="#f1c21d"/><path d="M11.9 6.4 C11.6 5 10.6 4.4 9.6 4.4 C8 4.4 7.3 5.6 7.5 7.2 L7.8 9.2 M6 9.2 H10.6 M7.8 9.2 C8 10.8 7.4 12.2 6 13.2 H12.2" fill="none" stroke="#6e3f0c" stroke-width="1.55" stroke-linejoin="round"/></svg><span class="t " style="left:35.6px;top:365.0px;font-size:11px;line-height:12px;font-weight:bold;color:#000;">Check In Fee</span><span class="t " style="left:386.0px;top:365.0px;font-size:11px;line-height:12px;letter-spacing:-0.12px;color:#111;">ings, Issuing of Keys at Pro...</span><span class="t " style="left:547.0px;top:363.0px;font-size:13px;line-height:15px;font-weight:bold;letter-spacing:0.44px;color:#2c6fcf;text-decoration:underline;">details</span><span class="t " style="left:622.3px;top:365.0px;font-size:11px;line-height:12px;font-weight:bold;letter-spacing:0.20px;color:#000;">landlords</span><div class="abs" style="left:722px;top:362px;width:59px;height:17px;background:#4a0d9e"></div><span class="t " style="left:728.5px;top:365.0px;font-size:11px;line-height:12px;font-weight:bold;letter-spacing:0.33px;color:#fff;">Tenancy</span><div class="abs" style="left:0;top:384.00px;width:854px;height:29px;background:#fafafa"></div><svg class="abs" style="left:8.7px;top:390.7px" width="16.6" height="16.6" viewBox="0 0 18 18"><circle cx="9" cy="9" r="7.4" fill="#f1c21d"/><circle cx="9" cy="9" r="7.9" fill="none" stroke="#f1c21d" stroke-width="1.5" stroke-dasharray="2.3 1.836"/><circle cx="9" cy="9" r="5.6" fill="#f1c21d"/><path d="M11.9 6.4 C11.6 5 10.6 4.4 9.6 4.4 C8 4.4 7.3 5.6 7.5 7.2 L7.8 9.2 M6 9.2 H10.6 M7.8 9.2 C8 10.8 7.4 12.2 6 13.2 H12.2" fill="none" stroke="#6e3f0c" stroke-width="1.55" stroke-linejoin="round"/></svg><span class="t " style="left:35.6px;top:394.0px;font-size:11px;line-height:12px;font-weight:bold;color:#000;">Inventory Fee</span><span class="t " style="left:386.0px;top:394.0px;font-size:11px;line-height:12px;letter-spacing:0.19px;color:#111;">e of condition report</span><span class="t " style="left:547.0px;top:392.0px;font-size:13px;line-height:15px;font-weight:bold;letter-spacing:0.44px;color:#2c6fcf;text-decoration:underline;">details</span><span class="t " style="left:622.3px;top:394.0px;font-size:11px;line-height:12px;font-weight:bold;letter-spacing:0.20px;color:#000;">landlords</span><div class="abs" style="left:722px;top:391px;width:59px;height:17px;background:#4a0d9e"></div><span class="t " style="left:728.5px;top:394.0px;font-size:11px;line-height:12px;font-weight:bold;letter-spacing:0.33px;color:#fff;">Tenancy</span><svg class="abs" style="left:8.7px;top:419.7px" width="16.6" height="16.6" viewBox="0 0 18 18"><circle cx="9" cy="9" r="7.4" fill="#f1c21d"/><circle cx="9" cy="9" r="7.9" fill="none" stroke="#f1c21d" stroke-width="1.5" stroke-dasharray="2.3 1.836"/><circle cx="9" cy="9" r="5.6" fill="#f1c21d"/><path d="M11.9 6.4 C11.6 5 10.6 4.4 9.6 4.4 C8 4.4 7.3 5.6 7.5 7.2 L7.8 9.2 M6 9.2 H10.6 M7.8 9.2 C8 10.8 7.4 12.2 6 13.2 H12.2" fill="none" stroke="#6e3f0c" stroke-width="1.55" stroke-linejoin="round"/></svg><span class="t " style="left:35.6px;top:423.0px;font-size:11px;line-height:12px;font-weight:bold;color:#000;">Landlord Fee</span><span class="t " style="left:547.0px;top:421.0px;font-size:13px;line-height:15px;font-weight:bold;letter-spacing:0.44px;color:#2c6fcf;text-decoration:underline;">details</span><span class="t " style="left:622.3px;top:423.0px;font-size:11px;line-height:12px;font-weight:bold;letter-spacing:0.20px;color:#000;">landlords</span><div class="abs" style="left:722px;top:420px;width:59px;height:17px;background:#4a0d9e"></div><span class="t " style="left:728.5px;top:423.0px;font-size:11px;line-height:12px;font-weight:bold;letter-spacing:0.33px;color:#fff;">Tenancy</span><div class="abs" style="left:0;top:442.00px;width:854px;height:29px;background:#fafafa"></div><svg class="abs" style="left:8.7px;top:448.7px" width="16.6" height="16.6" viewBox="0 0 18 18"><circle cx="9" cy="9" r="7.4" fill="#f1c21d"/><circle cx="9" cy="9" r="7.9" fill="none" stroke="#f1c21d" stroke-width="1.5" stroke-dasharray="2.3 1.836"/><circle cx="9" cy="9" r="5.6" fill="#f1c21d"/><path d="M11.9 6.4 C11.6 5 10.6 4.4 9.6 4.4 C8 4.4 7.3 5.6 7.5 7.2 L7.8 9.2 M6 9.2 H10.6 M7.8 9.2 C8 10.8 7.4 12.2 6 13.2 H12.2" fill="none" stroke="#6e3f0c" stroke-width="1.55" stroke-linejoin="round"/></svg><span class="t " style="left:35.6px;top:452.0px;font-size:11px;line-height:12px;font-weight:bold;color:#000;">Let Only Fee</span><span class="t " style="left:377.5px;top:452.0px;font-size:11px;line-height:12px;letter-spacing:0.21px;color:#111;">roperty</span><span class="t " style="left:547.0px;top:450.0px;font-size:13px;line-height:15px;font-weight:bold;letter-spacing:0.44px;color:#2c6fcf;text-decoration:underline;">details</span><span class="t " style="left:622.3px;top:452.0px;font-size:11px;line-height:12px;font-weight:bold;letter-spacing:0.20px;color:#000;">landlords</span><div class="abs" style="left:722px;top:449px;width:59px;height:17px;background:#4a0d9e"></div><span class="t " style="left:728.5px;top:452.0px;font-size:11px;line-height:12px;font-weight:bold;letter-spacing:0.33px;color:#fff;">Tenancy</span><svg class="abs" style="left:8.7px;top:477.7px" width="16.6" height="16.6" viewBox="0 0 18 18"><circle cx="9" cy="9" r="7.4" fill="#f1c21d"/><circle cx="9" cy="9" r="7.9" fill="none" stroke="#f1c21d" stroke-width="1.5" stroke-dasharray="2.3 1.836"/><circle cx="9" cy="9" r="5.6" fill="#f1c21d"/><path d="M11.9 6.4 C11.6 5 10.6 4.4 9.6 4.4 C8 4.4 7.3 5.6 7.5 7.2 L7.8 9.2 M6 9.2 H10.6 M7.8 9.2 C8 10.8 7.4 12.2 6 13.2 H12.2" fill="none" stroke="#6e3f0c" stroke-width="1.55" stroke-linejoin="round"/></svg><span class="t " style="left:35.6px;top:481.0px;font-size:11px;line-height:12px;font-weight:bold;color:#000;">Key Handover</span><span class="t " style="left:382.0px;top:481.0px;font-size:11px;line-height:12px;letter-spacing:-0.10px;color:#111;">handover of keys</span><span class="t " style="left:547.0px;top:479.0px;font-size:13px;line-height:15px;font-weight:bold;letter-spacing:0.44px;color:#2c6fcf;text-decoration:underline;">details</span><span class="t " style="left:622.3px;top:481.0px;font-size:11px;line-height:12px;font-weight:bold;letter-spacing:0.66px;color:#000;">tenants</span><div class="abs" style="left:722px;top:478px;width:59px;height:17px;background:#4a0d9e"></div><span class="t " style="left:728.5px;top:481.0px;font-size:11px;line-height:12px;font-weight:bold;letter-spacing:0.33px;color:#fff;">Tenancy</span><div class="abs" style="left:0;top:500.00px;width:854px;height:29px;background:#fafafa"></div><svg class="abs" style="left:8.7px;top:506.7px" width="16.6" height="16.6" viewBox="0 0 18 18"><circle cx="9" cy="9" r="7.4" fill="#f1c21d"/><circle cx="9" cy="9" r="7.9" fill="none" stroke="#f1c21d" stroke-width="1.5" stroke-dasharray="2.3 1.836"/><circle cx="9" cy="9" r="5.6" fill="#f1c21d"/><path d="M11.9 6.4 C11.6 5 10.6 4.4 9.6 4.4 C8 4.4 7.3 5.6 7.5 7.2 L7.8 9.2 M6 9.2 H10.6 M7.8 9.2 C8 10.8 7.4 12.2 6 13.2 H12.2" fill="none" stroke="#6e3f0c" stroke-width="1.55" stroke-linejoin="round"/></svg><span class="t " style="left:35.6px;top:510.0px;font-size:11px;line-height:12px;font-weight:bold;color:#000;">Late Payment</span><span class="t " style="left:547.0px;top:508.0px;font-size:13px;line-height:15px;font-weight:bold;letter-spacing:0.44px;color:#2c6fcf;text-decoration:underline;">details</span><span class="t " style="left:622.3px;top:510.0px;font-size:11px;line-height:12px;font-weight:bold;letter-spacing:0.66px;color:#000;">tenants</span><div class="abs" style="left:722px;top:507px;width:59px;height:17px;background:#4a0d9e"></div><span class="t " style="left:728.5px;top:510.0px;font-size:11px;line-height:12px;font-weight:bold;letter-spacing:0.33px;color:#fff;">Tenancy</span><svg class="abs" style="left:8.7px;top:535.7px" width="16.6" height="16.6" viewBox="0 0 18 18"><circle cx="9" cy="9" r="7.4" fill="#f1c21d"/><circle cx="9" cy="9" r="7.9" fill="none" stroke="#f1c21d" stroke-width="1.5" stroke-dasharray="2.3 1.836"/><circle cx="9" cy="9" r="5.6" fill="#f1c21d"/><path d="M11.9 6.4 C11.6 5 10.6 4.4 9.6 4.4 C8 4.4 7.3 5.6 7.5 7.2 L7.8 9.2 M6 9.2 H10.6 M7.8 9.2 C8 10.8 7.4 12.2 6 13.2 H12.2" fill="none" stroke="#6e3f0c" stroke-width="1.55" stroke-linejoin="round"/></svg><span class="t " style="left:35.6px;top:539.0px;font-size:11px;line-height:12px;font-weight:bold;color:#000;">Tenant Charge</span><span class="t " style="left:380.0px;top:539.0px;font-size:11px;line-height:12px;letter-spacing:0.04px;color:#111;">charge applied per Tenant</span><span class="t " style="left:547.0px;top:537.0px;font-size:13px;line-height:15px;font-weight:bold;letter-spacing:0.44px;color:#2c6fcf;text-decoration:underline;">details</span><span class="t " style="left:622.3px;top:539.0px;font-size:11px;line-height:12px;font-weight:bold;letter-spacing:0.20px;color:#000;">landlords</span><div class="abs" style="left:722px;top:536px;width:59px;height:17px;background:#4a0d9e"></div><span class="t " style="left:728.5px;top:539.0px;font-size:11px;line-height:12px;font-weight:bold;letter-spacing:0.33px;color:#fff;">Tenancy</span><div class="abs" style="left:0;top:558.00px;width:854px;height:29px;background:#fafafa"></div><svg class="abs" style="left:8.7px;top:564.7px" width="16.6" height="16.6" viewBox="0 0 18 18"><circle cx="9" cy="9" r="7.4" fill="#f1c21d"/><circle cx="9" cy="9" r="7.9" fill="none" stroke="#f1c21d" stroke-width="1.5" stroke-dasharray="2.3 1.836"/><circle cx="9" cy="9" r="5.6" fill="#f1c21d"/><path d="M11.9 6.4 C11.6 5 10.6 4.4 9.6 4.4 C8 4.4 7.3 5.6 7.5 7.2 L7.8 9.2 M6 9.2 H10.6 M7.8 9.2 C8 10.8 7.4 12.2 6 13.2 H12.2" fill="none" stroke="#6e3f0c" stroke-width="1.55" stroke-linejoin="round"/></svg><span class="t " style="left:35.6px;top:568.0px;font-size:11px;line-height:12px;font-weight:bold;color:#000;">Lost Keys</span><span class="t " style="left:547.0px;top:566.0px;font-size:13px;line-height:15px;font-weight:bold;letter-spacing:0.44px;color:#2c6fcf;text-decoration:underline;">details</span><span class="t " style="left:622.3px;top:568.0px;font-size:11px;line-height:12px;font-weight:bold;letter-spacing:0.66px;color:#000;">tenants</span><div class="abs" style="left:722px;top:565px;width:59px;height:17px;background:#4a0d9e"></div><span class="t " style="left:728.5px;top:568.0px;font-size:11px;line-height:12px;font-weight:bold;letter-spacing:0.33px;color:#fff;">Tenancy</span><svg class="abs" style="left:8.7px;top:593.7px" width="16.6" height="16.6" viewBox="0 0 18 18"><circle cx="9" cy="9" r="7.4" fill="#f1c21d"/><circle cx="9" cy="9" r="7.9" fill="none" stroke="#f1c21d" stroke-width="1.5" stroke-dasharray="2.3 1.836"/><circle cx="9" cy="9" r="5.6" fill="#f1c21d"/><path d="M11.9 6.4 C11.6 5 10.6 4.4 9.6 4.4 C8 4.4 7.3 5.6 7.5 7.2 L7.8 9.2 M6 9.2 H10.6 M7.8 9.2 C8 10.8 7.4 12.2 6 13.2 H12.2" fill="none" stroke="#6e3f0c" stroke-width="1.55" stroke-linejoin="round"/></svg><span class="t " style="left:35.6px;top:597.0px;font-size:11px;line-height:12px;font-weight:bold;color:#000;">Replacement Keys</span><span class="t " style="left:386.5px;top:597.0px;font-size:11px;line-height:12px;letter-spacing:-0.03px;color:#111;">t Set of Keys</span><span class="t " style="left:547.0px;top:595.0px;font-size:13px;line-height:15px;font-weight:bold;letter-spacing:0.44px;color:#2c6fcf;text-decoration:underline;">details</span><span class="t " style="left:622.3px;top:597.0px;font-size:11px;line-height:12px;font-weight:bold;letter-spacing:0.66px;color:#000;">tenants</span><div class="abs" style="left:722px;top:594px;width:59px;height:17px;background:#4a0d9e"></div><span class="t " style="left:728.5px;top:597.0px;font-size:11px;line-height:12px;font-weight:bold;letter-spacing:0.33px;color:#fff;">Tenancy</span><div class="abs" style="left:0;top:616.00px;width:854px;height:29px;background:#fafafa"></div><svg class="abs" style="left:8.7px;top:622.7px" width="16.6" height="16.6" viewBox="0 0 18 18"><circle cx="9" cy="9" r="7.4" fill="#f1c21d"/><circle cx="9" cy="9" r="7.9" fill="none" stroke="#f1c21d" stroke-width="1.5" stroke-dasharray="2.3 1.836"/><circle cx="9" cy="9" r="5.6" fill="#f1c21d"/><path d="M11.9 6.4 C11.6 5 10.6 4.4 9.6 4.4 C8 4.4 7.3 5.6 7.5 7.2 L7.8 9.2 M6 9.2 H10.6 M7.8 9.2 C8 10.8 7.4 12.2 6 13.2 H12.2" fill="none" stroke="#6e3f0c" stroke-width="1.55" stroke-linejoin="round"/></svg><span class="t " style="left:35.6px;top:626.0px;font-size:11px;line-height:12px;font-weight:bold;color:#000;">Land Registry Check</span><span class="t " style="left:385.0px;top:626.0px;font-size:11px;line-height:12px;letter-spacing:-0.11px;color:#111;">ddress against Land Registry</span><span class="t " style="left:547.0px;top:624.0px;font-size:13px;line-height:15px;font-weight:bold;letter-spacing:0.44px;color:#2c6fcf;text-decoration:underline;">details</span><span class="t " style="left:622.3px;top:626.0px;font-size:11px;line-height:12px;font-weight:bold;letter-spacing:0.20px;color:#000;">landlords</span><div class="abs" style="left:722px;top:623px;width:59px;height:17px;background:#4a0d9e"></div><span class="t " style="left:728.5px;top:626.0px;font-size:11px;line-height:12px;font-weight:bold;letter-spacing:0.33px;color:#fff;">Tenancy</span><svg class="abs" style="left:8.7px;top:651.7px" width="16.6" height="16.6" viewBox="0 0 18 18"><circle cx="9" cy="9" r="7.4" fill="#f1c21d"/><circle cx="9" cy="9" r="7.9" fill="none" stroke="#f1c21d" stroke-width="1.5" stroke-dasharray="2.3 1.836"/><circle cx="9" cy="9" r="5.6" fill="#f1c21d"/><path d="M11.9 6.4 C11.6 5 10.6 4.4 9.6 4.4 C8 4.4 7.3 5.6 7.5 7.2 L7.8 9.2 M6 9.2 H10.6 M7.8 9.2 C8 10.8 7.4 12.2 6 13.2 H12.2" fill="none" stroke="#6e3f0c" stroke-width="1.55" stroke-linejoin="round"/></svg><span class="t " style="left:35.6px;top:655.0px;font-size:11px;line-height:12px;font-weight:bold;letter-spacing:0.43px;color:#000;">Management Fee - Basic</span><span class="t " style="left:224.7px;top:655.0px;font-size:11px;line-height:12px;letter-spacing:0.03px;color:#111;">8% - Rent Collection, Management of Communication with ...</span><span class="t " style="left:547.0px;top:653.0px;font-size:13px;line-height:15px;font-weight:bold;letter-spacing:0.44px;color:#2c6fcf;text-decoration:underline;">details</span><span class="t " style="left:622.3px;top:655.0px;font-size:11px;line-height:12px;font-weight:bold;letter-spacing:0.20px;color:#000;">landlords</span><div class="abs" style="left:722px;top:652px;width:59px;height:17px;background:#4a0d9e"></div><span class="t " style="left:728.5px;top:655.0px;font-size:11px;line-height:12px;font-weight:bold;letter-spacing:0.33px;color:#fff;">Tenancy</span><div class="abs" style="left:853px;top:65px;width:17px;height:614px;background:#f0f0f0"></div><div class="abs" style="left:855px;top:81px;width:13px;height:315px;background:#c1c0c1;border:1px solid #a9a8a9"></div><div class="abs" style="left:857.5px;top:71px;width:0;height:0;border-left:4px solid transparent;border-right:4px solid transparent;border-bottom:4px solid #a3a3a3"></div><div class="abs" style="left:857.5px;top:667px;width:0;height:0;border-left:4px solid transparent;border-right:4px solid transparent;border-top:4px solid #4a4a4a"></div></div>
</div>
<!-- FRONT WINDOW -->
<div class="win" id="w2" style="left:76px;top:238px;width:862px;height:459px">
<svg class="abs" style="left:7.7px;top:7.4px" width="16.6" height="16.6" viewBox="0 0 18 18"><circle cx="9" cy="9" r="7.4" fill="#25a35c"/><circle cx="9" cy="9" r="7.9" fill="none" stroke="#25a35c" stroke-width="1.5" stroke-dasharray="2.3 1.836"/><circle cx="9" cy="9" r="5.6" fill="#25a35c"/><path d="M11.9 6.4 C11.6 5 10.6 4.4 9.6 4.4 C8 4.4 7.3 5.6 7.5 7.2 L7.8 9.2 M6 9.2 H10.6 M7.8 9.2 C8 10.8 7.4 12.2 6 13.2 H12.2" fill="none" stroke="#0a5226" stroke-width="1.55" stroke-linejoin="round"/></svg><span class="t " style="left:31.2px;top:9.0px;font-size:13px;line-height:15px;font-weight:bold;letter-spacing:-0.30px;color:#3f6494;">Control Panel</span><span class="t " style="left:121.0px;top:9.5px;font-size:12px;line-height:14px;font-weight:bold;color:#3f6494;">›</span><span class="t " style="left:134.5px;top:9.0px;font-size:13px;line-height:15px;font-weight:bold;letter-spacing:-0.44px;color:#3f6494;">Fee Schemes List</span><span class="t " style="left:246.0px;top:9.5px;font-size:12px;line-height:14px;font-weight:bold;color:#3f6494;">›</span><span class="t " style="left:259.2px;top:9.0px;font-size:13px;line-height:15px;font-weight:bold;transform:scaleX(0.9437);transform-origin:0 0;color:#3f6494;">Fee Scheme</span><svg class="abs" style="left:786px;top:8px" width="70" height="20" viewBox="0 0 70 20"><rect x="0.8" y="7.9" width="12" height="2.1" fill="#6f6a64"/><g fill="#6f6a64"><rect x="25.8" y="2.1" width="4" height="3.7"/><rect x="35" y="2.1" width="4" height="3.7"/><rect x="25.8" y="11.2" width="4" height="3.7"/><rect x="35" y="11.2" width="4" height="3.7"/></g><path d="M28.6 4.6 L30.1 6.2 M36.2 4.6 L34.7 6.2 M28.6 12.4 L30.1 10.8 M36.2 12.4 L34.7 10.8" stroke="#6f6a64" stroke-width="1.7" stroke-linecap="round" fill="none"/><path d="M52.5 2.6 L64.3 14.4 M64.3 2.6 L52.5 14.4" stroke="#6f6a64" stroke-width="1.6" fill="none"/></svg>
 <div class="inner" id="w2i" style="left:5px;top:33px;width:852px;height:421px"><div class="tbar" style="height:41px"></div><svg class="abs" style="left:12.8px;top:14.4px" width="14.6" height="11.8" viewBox="0 0 16 13"><path d="M0.4 6.6 L3.6 4.2 L6.2 7.4 L13.2 0.4 L15.6 2.8 L6.4 12.6 Z" fill="#2c9a56"/></svg><span class="t " style="left:32.4px;top:15.0px;font-size:11px;line-height:12px;font-weight:bold;letter-spacing:0.25px;color:#333;">Save changes</span><svg class="abs" style="left:127px;top:12px" width="16" height="16" viewBox="0 0 16 16"><circle cx="8" cy="8" r="6.6" fill="#fff" stroke="#2c5c9c" stroke-width="1.1"/><rect x="4" y="7" width="8" height="2" fill="#2c5c9c"/></svg><span class="t " style="left:147.6px;top:14.0px;font-size:11px;line-height:12px;transform:scaleX(0.9255);transform-origin:0 0;color:#333;">Cancel</span><span class="t " style="left:10.5px;top:58.0px;font-size:13px;line-height:15px;letter-spacing:-0.30px;color:#4a4a4a;">Fee Scheme Name:</span><div class="abs inp" style="left:175px;top:51px;width:150px;height:28px"></div><span class="t " style="left:181.5px;top:58.0px;font-size:13px;line-height:15px;letter-spacing:-0.15px;color:#111;">Landlord: Full Managem</span><span class="t " style="left:10.5px;top:91.0px;font-size:13px;line-height:15px;letter-spacing:-0.19px;color:#4a4a4a;">Charge Fees Against:</span><span class="t " style="left:138.5px;top:91.0px;font-size:14px;line-height:16px;font-weight:bold;color:#e02020;">*</span><div class="abs inp" style="left:175px;top:84px;width:150px;height:28px"></div><span class="t " style="left:181.5px;top:91.0px;font-size:13px;line-height:15px;letter-spacing:-0.15px;color:#111;">Landlords Account</span><div class="abs" style="left:307px;top:96.5px;width:0;height:0;border-left:4.5px solid transparent;border-right:4.5px solid transparent;border-top:5px solid #8a8a8a"></div><span class="t " style="left:10.5px;top:124.0px;font-size:13px;line-height:15px;letter-spacing:-0.29px;color:#4a4a4a;">Fee Scheme Context:</span><span class="t " style="left:138.5px;top:124.0px;font-size:14px;line-height:16px;font-weight:bold;color:#e02020;">*</span><div class="abs inp" style="left:175px;top:117px;width:150px;height:28px"></div><span class="t " style="left:181.5px;top:124.0px;font-size:13px;line-height:15px;letter-spacing:-0.07px;color:#111;">Tenancy</span><div class="abs" style="left:307px;top:129.5px;width:0;height:0;border-left:4.5px solid transparent;border-right:4.5px solid transparent;border-top:5px solid #8a8a8a"></div><div class="abs gpanel" style="left:11px;top:182px;width:829px;height:260px"></div><div class="abs" style="left:12px;top:183px;width:827px;height:40px;background:linear-gradient(#fff 0,#fbfbfb 45%,#eeeeee 100%)"></div><svg class="abs" style="left:23.3px;top:194.5px;opacity:1" width="14.4" height="14.4" viewBox="0 0 15 15"><path d="M5.5 0.6 H9.5 V5.5 H14.4 V9.5 H9.5 V14.4 H5.5 V9.5 H0.6 V5.5 H5.5 Z" fill="#2fa565" stroke="#22905a" stroke-width="0.6"/></svg><span class="t " style="left:43.2px;top:196.0px;font-size:11px;line-height:12px;letter-spacing:-0.22px;color:#222;">Add charge</span><div class="abs dbtn" style="left:110px;top:188.5px;width:101px;height:27px"></div><svg class="abs" style="left:115.5px;top:193px;opacity:.45" width="17" height="17" viewBox="0 0 17 17"><path d="M11.8 1 L16 5.2 L6 15.2 L1.8 11 Z" fill="#777"/><path d="M1.3 11.9 L5.1 15.7 L0.6 16.4 Z" fill="#999"/></svg><span class="t " style="left:136.1px;top:196.0px;font-size:11px;line-height:12px;letter-spacing:0.04px;color:#aaa;">Edit selection</span><div class="abs dbtn" style="left:214.5px;top:188.5px;width:121px;height:27px"></div><svg class="abs" style="left:220.5px;top:194.5px;opacity:0.45" width="15" height="15" viewBox="0 0 15 15"><g transform="rotate(45 7.5 7.5)" fill="#e0474c"><rect x="-0.6" y="5.2" width="16.2" height="4.6" rx="0.7"/><rect x="5.2" y="-0.6" width="4.6" height="16.2" rx="0.7"/></g></svg><span class="t " style="left:240.2px;top:196.0px;font-size:11px;line-height:12px;letter-spacing:-0.13px;color:#aaa;">Remove selection</span><div class="ghead" style="left:12px;right:auto;width:827px;top:222px;height:24px;border-top:1px solid #d0d0d0"></div><div class="colsep" style="left:171px;top:222px;height:23px"></div><div class="colsep" style="left:440px;top:222px;height:23px"></div><div class="colsep" style="left:570px;top:222px;height:23px"></div><div class="colsep" style="left:838px;top:222px;height:23px"></div><span class="t " style="left:17.5px;top:228.0px;font-size:11px;line-height:12px;transform:scaleX(0.9372);transform-origin:0 0;color:#111;">Name</span><span class="t " style="left:178.3px;top:228.0px;font-size:11px;line-height:12px;letter-spacing:-0.08px;color:#111;">Description</span><span class="t " style="left:447.5px;top:228.0px;font-size:11px;line-height:12px;letter-spacing:-0.08px;color:#111;">Duration</span><span class="t " style="left:577.2px;top:228.0px;font-size:11px;line-height:12px;color:#111;">Fee collection rule</span><div class="abs" style="left:12px;top:289px;width:827px;height:41px;background:#fafafa"></div><span class="t " style="left:20.3px;top:257.0px;font-size:11px;line-height:12px;letter-spacing:-0.19px;color:#111;">Tenancy: Set Up Fee</span><span class="t " style="left:181.0px;top:257.0px;font-size:11px;line-height:12px;color:#111;">Advertising, sourcing suitable tenants, and compl...</span><span class="t " style="left:450.3px;top:257.0px;font-size:11px;line-height:12px;letter-spacing:0.13px;color:#111;">One off</span><span class="t " style="left:580.3px;top:257.0px;font-size:11px;line-height:12px;font-weight:bold;letter-spacing:0.53px;color:#000;">Percentage fee</span><span class="t " style="left:580.3px;top:270.0px;font-size:11px;line-height:12px;font-weight:bold;transform:scaleX(1.1938);transform-origin:0 0;color:#000;">25%</span><span class="t " style="left:20.3px;top:299.0px;font-size:11px;line-height:12px;letter-spacing:-0.15px;color:#111;">Management Fee 10%</span><span class="t " style="left:181.0px;top:299.0px;font-size:11px;line-height:12px;letter-spacing:-0.03px;color:#111;">Rent Collection, Management of Communication ...</span><span class="t " style="left:450.3px;top:299.0px;font-size:11px;line-height:12px;letter-spacing:-0.15px;color:#111;">Recurring</span><span class="t " style="left:580.3px;top:299.0px;font-size:11px;line-height:12px;font-weight:bold;letter-spacing:0.53px;color:#000;">Percentage fee</span><span class="t " style="left:580.3px;top:312.0px;font-size:11px;line-height:12px;font-weight:bold;transform:scaleX(1.1938);transform-origin:0 0;color:#000;">10%</span></div>
</div>
</body>
</html>
